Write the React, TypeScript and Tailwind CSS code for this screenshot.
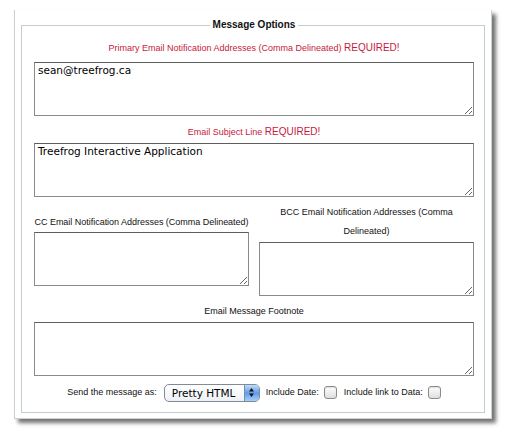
import React from 'react';

const labelFont = "font-['Liberation_Sans',Arial,sans-serif] text-[9px] leading-[19px]";

function Box({ value }: { value?: string }) {
  return (
    <textarea
      defaultValue={value}
      className="block h-[54px] w-full resize border border-[#8a8a8a] border-t-[#5e5e5e] bg-white px-[3px] py-0 font-['DejaVu_Sans',sans-serif] text-[10.5px] leading-[14px] text-black outline-none"
    />
  );
}

function Check({ className = '' }: { className?: string }) {
  return (
    <input
      type="checkbox"
      className={`h-[13px] w-[13px] appearance-none rounded-[3px] border border-[#8c8c8c] bg-linear-to-b from-white to-[#dedede] shadow-[inset_0_1px_1px_rgba(0,0,0,0.12)] ${className}`}
    />
  );
}

export default function App() {
  return (
    <div className="h-[432px] w-[515px] bg-white pl-[14px] pt-[10px]">
      <div className="h-[409px] w-[478px] border-x border-b border-[#c8d2d5] bg-white pl-[6px] pt-[8px] shadow-[4px_4px_4px_rgba(0,0,0,0.55)]">
        <fieldset className="h-[395px] w-[464px] border border-[#c3cdd0] pl-[12px] pr-[10px]">
          <legend className="mx-auto px-[3px] font-['Liberation_Sans',Arial,sans-serif] text-[10px] font-bold leading-[14px] text-[#111]">
            Message Options
          </legend>

          <div className="pt-[6px]">
            {/* primary addresses */}
            <p className={`${labelFont} text-center text-[#c8183c]`}>
              Primary Email Notification Addresses (Comma Delineated){' '}
              <span className="text-[10px]">REQUIRED!</span>
            </p>
            <div className="mt-[4px]">
              <Box value="sean@treefrog.ca" />
            </div>

            {/* subject */}
            <p className={`${labelFont} mt-[6px] text-center text-[#c8183c]`}>
              Email Subject Line <span className="text-[10px]">REQUIRED!</span>
            </p>
            <div className="mt-[1px]">
              <Box value="Treefrog Interactive Application" />
            </div>

            {/* cc / bcc */}
            <div className="mt-[6px] grid grid-cols-2 items-center gap-x-[10px]">
              <div>
                <p className={`${labelFont} whitespace-nowrap text-center text-[#111] tracking-[-0.02px]`}>
                  CC Email Notification Addresses (Comma Delineated)
                </p>
                <div className="mt-[0px]">
                  <Box />
                </div>
              </div>
              <div>
                <p className={`${labelFont} text-center text-[#111]`}>
                  BCC Email Notification Addresses (Comma
                  <br />
                  Delineated)
                </p>
                <div className="mt-[1px]">
                  <Box />
                </div>
              </div>
            </div>

            {/* footnote */}
            <p className={`${labelFont} mt-[6px] text-center text-[#111]`}>Email Message Footnote</p>
            <div className="mt-[1px]">
              <Box />
            </div>

            {/* send options */}
            <div className={`${labelFont} mt-[7px] flex h-[19px] items-center justify-center text-[#111]`}>
              <span>Send the message as:</span>
              <div className="ml-[7px] flex h-[18px] w-[96px] overflow-hidden rounded-[5px] border border-[#7f8b99] bg-linear-to-b from-white to-[#eef1f4]">
                <span className="flex-1 pl-[7px] font-['DejaVu_Sans',sans-serif] text-[10.5px] leading-[16px] text-black">
                  Pretty HTML
                </span>
                <span className="flex w-[15px] items-center justify-center border-l border-[#6f8fb7] bg-linear-to-b from-[#c2dcf8] via-[#5d9be6] to-[#a9cff6]">
                  <svg width="7" height="11" viewBox="0 0 7 11">
                    <path d="M3.5 1 L6 4.5 H1 Z" fill="#111" />
                    <path d="M3.5 10 L6 6.5 H1 Z" fill="#111" />
                  </svg>
                </span>
              </div>
              <span className="ml-[6px]">Include Date:</span>
              <Check className="ml-[5px]" />
              <span className="ml-[7px]">Include link to Data:</span>
              <Check className="ml-[5px]" />
            </div>
          </div>
        </fieldset>
      </div>
    </div>
  );
}
